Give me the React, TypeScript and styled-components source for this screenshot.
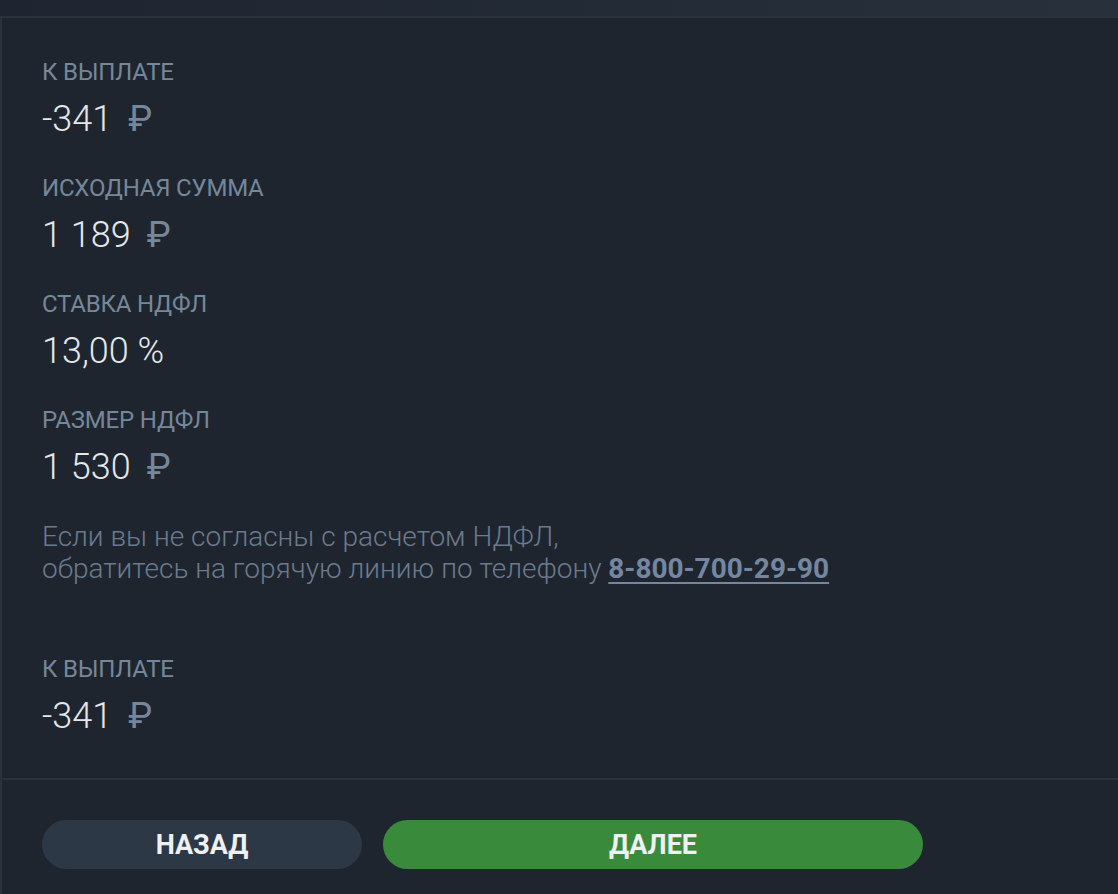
import React from 'react';
import styled, { createGlobalStyle } from 'styled-components';

const GlobalStyle = createGlobalStyle`
  html, body {
    margin: 0;
    padding: 0;
    background: #1e252f;
  }
  body {
    font-family: Roboto, "Noto Sans", "Liberation Sans", sans-serif;
    -webkit-font-smoothing: antialiased;
  }
`;

const Page = styled.div`
  width: 1118px;
  height: 894px;
  display: flex;
  flex-direction: column;
  background: #1e252f;
  overflow: hidden;
`;

const TopStrip = styled.div`
  height: 16px;
  flex-shrink: 0;
  background: linear-gradient(90deg, #1e2530 0%, #222a35 50%, #28303b 100%);
  border-bottom: 2px solid #2a323c;
`;

const Panel = styled.div`
  flex: 1;
  display: flex;
  flex-direction: column;
  border-left: 2px solid #2a323c;
`;

const Body = styled.div`
  padding: 40px 40px 40px;
  display: flex;
  flex-direction: column;
`;

const Item = styled.div<{ $gap?: number }>`
  display: flex;
  flex-direction: column;
  margin-bottom: ${p => (p.$gap ?? 33)}px;
  &:last-child {
    margin-bottom: 0;
  }
`;

const Label = styled.div`
  font-size: 24px;
  line-height: 28px;
  color: #76879a;
  text-transform: uppercase;
  letter-spacing: -0.2px;
  margin-bottom: 11px;
`;

const Value = styled.div`
  font-size: 36px;
  line-height: 44px;
  font-weight: 300;
  color: #e4e7ea;
`;

const Currency = styled.span`
  color: #76879a;
  font-weight: 400;
  margin-left: 16px;
`;

const Note = styled.p`
  margin: 0 0 70px;
  font-size: 28px;
  line-height: 32px;
  font-weight: 300;
  color: #6b7b8d;
`;

const Phone = styled.a`
  color: #7587a0;
  font-weight: 700;
  text-decoration: underline;
  text-underline-offset: 4px;
  text-decoration-thickness: 2px;
`;

const Divider = styled.div`
  height: 2px;
  background: #2a323c;
`;

const Footer = styled.div`
  display: flex;
  gap: 21px;
  padding: 40px 40px 0;
`;

const Button = styled.button<{ $primary?: boolean; $width: number }>`
  width: ${p => p.$width}px;
  height: 49px;
  border: none;
  border-radius: 25px;
  background: ${p => (p.$primary ? '#3a8a3c' : '#2c3845')};
  color: #eef0f2;
  font-family: Roboto, "Noto Sans", "Liberation Sans", sans-serif;
  font-size: 27px;
  font-weight: 700;
  text-transform: uppercase;
  cursor: pointer;
  padding: 0;
`;

const Money: React.FC<{ amount: string }> = ({ amount }) => (
  <Value>
    {amount}
    <Currency>₽</Currency>
  </Value>
);

export default function App() {
  return (
    <Page>
      <GlobalStyle />
      <TopStrip />
      <Panel>
        <Body>
          <Item>
            <Label>К выплате</Label>
            <Money amount="-341" />
          </Item>
          <Item>
            <Label>Исходная сумма</Label>
            <Money amount="1 189" />
          </Item>
          <Item>
            <Label>Ставка НДФЛ</Label>
            <Value>13,00 %</Value>
          </Item>
          <Item $gap={32}>
            <Label>Размер НДФЛ</Label>
            <Money amount="1 530" />
          </Item>
          <Note>
            Если вы не согласны с расчетом НДФЛ,
            <br />
            обратитесь на горячую линию по телефону <Phone href="#">8-800-700-29-90</Phone>
          </Note>
          <Item>
            <Label>К выплате</Label>
            <Money amount="-341" />
          </Item>
        </Body>
        <Divider />
        <Footer>
          <Button $width={320}>Назад</Button>
          <Button $primary $width={540}>Далее</Button>
        </Footer>
      </Panel>
    </Page>
  );
}
